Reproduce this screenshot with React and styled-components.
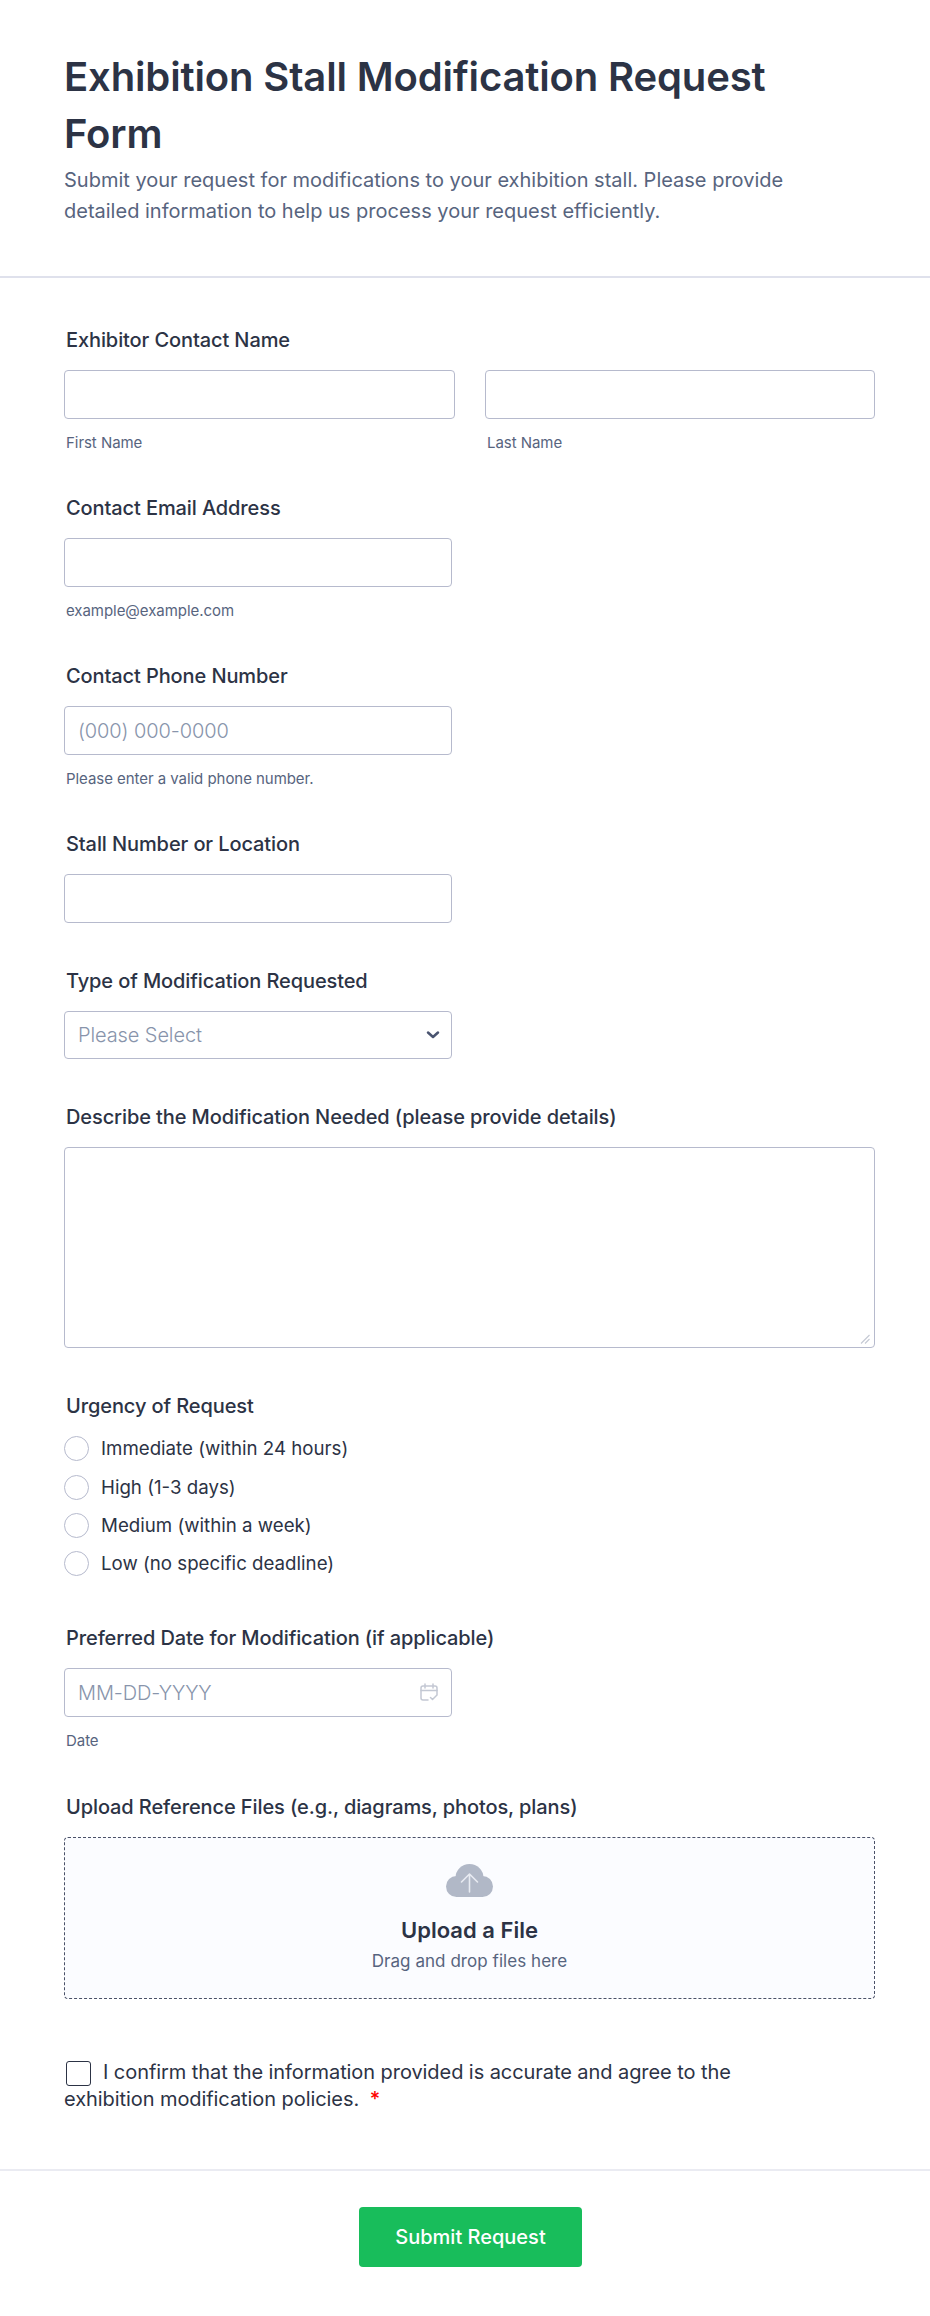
import React from 'react';
import styled, { createGlobalStyle } from 'styled-components';

const Global = createGlobalStyle`
  * { box-sizing: border-box; }
  html, body { margin: 0; padding: 0; background: #fff; }
  body { font-family: Inter, "Liberation Sans", sans-serif; color: #2c3345; }
`;
const Page = styled.form`width: 930px; height: 2316px; display: flex; flex-direction: column; background: #fff;`;
const Header = styled.header`
  padding: 48px 64px 0; border-bottom: 2px solid #dfe1ec; height: 278px;
`;
const Title = styled.h1`margin: 0 0 3px; font-size: 40px; line-height: 57px; font-weight: 600; letter-spacing: -0.14px; color: #2c3345; max-width: 740px;`;
const Subtitle = styled.p`margin: 0; font-size: 20px; line-height: 31px; color: #57647e; max-width: 760px;`;
const Body = styled.div`padding: 48px 55px 0 64px; display: flex; flex-direction: column; flex: 1;`;
const Field = styled.div`display: flex; flex-direction: column; margin-bottom: ${p => p.$mb}px;`;
const Label = styled.label`font-size: 20px; line-height: 28px; font-weight: 500; letter-spacing: -0.1px; color: #2c3345; padding-left: 2px; margin-bottom: 16px;`;
const Row = styled.div`display: flex; gap: 30px;`;
const Col = styled.div`display: flex; flex-direction: column;`;
const Input = styled.input`
  width: ${p => p.$w || 388}px; height: 49px; border: 1px solid #b6bacd; border-radius: 4px;
  padding: 0 13px; font: 300 20px Inter, sans-serif; letter-spacing: -0.1px; color: #2c3345; background: #fff; outline: none;
  &::placeholder { color: #8894ab; opacity: 1; }
`;
const Hint = styled.span`font-size: 15px; line-height: 20px; letter-spacing: -0.05px; color: #57647e; padding-left: 2px; margin-top: 14px;`;
const SelectWrap = styled.div`position: relative; width: 388px;`;
const Select = styled.select`
  display: block; width: 100%; height: 48px; border: 1px solid #b6bacd; border-radius: 4px; appearance: none;
  padding: 0 13px; font: 300 20px Inter, sans-serif; letter-spacing: -0.1px; color: #8894ab; background: #fff; outline: none;
`;
const Chevron = styled.svg`position: absolute; right: 12px; top: 19px; pointer-events: none;`;
const TextWrap = styled.div`position: relative; width: 811px;`;
const TextArea = styled.textarea`
  width: 100%; height: 201px; border: 1px solid #b6bacd; border-radius: 4px; display: block; outline: none; resize: none; background: #fff;
`;
const Grip = styled.svg`position: absolute; right: 5px; bottom: 4px; pointer-events: none;`;
const Radios = styled.div`display: flex; flex-direction: column; gap: 12.8px;`;
const RadioRow = styled.label`display: flex; align-items: center; gap: 12px; height: 25.5px; font-size: 18.7px; font-weight: 400; color: #2c3345;`;
const Radio = styled.input`
  appearance: none; margin: 0; width: 25px; height: 25px; border: 1px solid #b6bacd; border-radius: 50%; background: #fff;
`;
const DateWrap = styled.div`position: relative; width: 388px;`;
const DateIcon = styled.svg`position: absolute; right: 14px; top: 15px;`;
const Drop = styled.div`
  width: 811px; height: 162px; border: 1px dashed #4a5168; border-radius: 4px; background: #fbfcff;
  display: flex; flex-direction: column; align-items: center; padding-top: 26px;
`;
const DropTitle = styled.div`font-size: 22px; line-height: 28px; font-weight: 600; color: #2c3345; margin-top: 19px;`;
const DropSub = styled.div`font-size: 17px; line-height: 24px; letter-spacing: 0.05px; color: #57647e; margin-top: 5px;`;
const Agree = styled.label`display: block; width: 710px; font-size: 20px; line-height: 27px; font-weight: 400; letter-spacing: -0.07px; color: #2c3345;`;
const Check = styled.input`
  appearance: none; margin: 0 12px 0 2px; width: 25px; height: 25px; border: 1px solid #2c3345; border-radius: 3px; vertical-align: -7px; background: #fff;
`;
const Req = styled.span`color: #f00; margin-left: 5px; font-weight: 500;`;
const Footer = styled.footer`border-top: 2px solid #eaebf2; height: 147px; display: flex; justify-content: center; padding: 36px 0 0 11px;`;
const Submit = styled.button`
  width: 223px; height: 60px; border: 0; border-radius: 4px; background: #18bd5b; color: #fff;
  font: 500 20px Inter, sans-serif;
`;

const opts = ['Immediate (within 24 hours)', 'High (1-3 days)', 'Medium (within a week)', 'Low (no specific deadline)'];

export default function App() {
  return (
    <Page>
      <Global />
      <Header>
        <Title>Exhibition Stall Modification Request Form</Title>
        <Subtitle>Submit your request for modifications to your exhibition stall. Please provide detailed information to help us process your request efficiently.</Subtitle>
      </Header>
      <Body>
        <Field $mb={41}>
          <Label>Exhibitor Contact Name</Label>
          <Row>
            <Col><Input $w={391} /><Hint>First Name</Hint></Col>
            <Col><Input $w={390} /><Hint>Last Name</Hint></Col>
          </Row>
        </Field>
        <Field $mb={41}>
          <Label>Contact Email Address</Label>
          <Input />
          <Hint>example@example.com</Hint>
        </Field>
        <Field $mb={41}>
          <Label>Contact Phone Number</Label>
          <Input placeholder="(000) 000-0000" />
          <Hint>Please enter a valid phone number.</Hint>
        </Field>
        <Field $mb={44}>
          <Label>Stall Number or Location</Label>
          <Input />
        </Field>
        <Field $mb={44}>
          <Label>Type of Modification Requested</Label>
          <SelectWrap>
            <Select defaultValue=""><option value="">Please Select</option></Select>
            <Chevron width="14" height="10" viewBox="0 0 14 10" fill="none">
              <path d="M2 2.500 L7 7 L12 2.500" stroke="#4a5470" strokeWidth="2.500" strokeLinecap="round" strokeLinejoin="round" />
            </Chevron>
          </SelectWrap>
        </Field>
        <Field $mb={44}>
          <Label>Describe the Modification Needed (please provide details)</Label>
          <TextWrap>
            <TextArea />
            <Grip width="10" height="10" viewBox="0 0 10 10" fill="none" stroke="#c6cad5" strokeWidth="1.2">
              <path d="M1 9.500L9.500 1M5 9.500L9.500 5" />
            </Grip>
          </TextWrap>
        </Field>
        <Field $mb={48}>
          <Label>Urgency of Request</Label>
          <Radios>
            {opts.map(o => <RadioRow key={o}><Radio type="radio" name="urgency" />{o}</RadioRow>)}
          </Radios>
        </Field>
        <Field $mb={42}>
          <Label>Preferred Date for Modification (if applicable)</Label>
          <DateWrap>
            <Input placeholder="MM-DD-YYYY" />
            <DateIcon width="18" height="19" viewBox="0 0 18 19" fill="none" stroke="#c3c8d3" strokeWidth="1.5" strokeLinecap="round" strokeLinejoin="round">
              <path d="M8 17H3a2 2 0 0 1-2-2V5a2 2 0 0 1 2-2h12a2 2 0 0 1 2 2v7" />
              <path d="M1 7.500h16M5 1v4M13 1v4" />
              <path d="M10.500 14.500l2 2 4-4" />
            </DateIcon>
          </DateWrap>
          <Hint>Date</Hint>
        </Field>
        <Field $mb={60}>
          <Label>Upload Reference Files (e.g., diagrams, photos, plans)</Label>
          <Drop>
            <svg width="47" height="33" viewBox="0 0 47 33">
              <g fill="#b1b8c7">
                <circle cx="23.500" cy="14" r="14" />
                <circle cx="10.500" cy="22.500" r="10.500" />
                <circle cx="36.500" cy="22.500" r="10.500" />
                <rect x="10" y="14" width="27" height="19" />
              </g>
              <path fill="none" stroke="#e8ebf2" strokeWidth="1.6" strokeLinecap="round" strokeLinejoin="round" d="M23.500 28V10M15.500 18l8-8 8 8" />
            </svg>
            <DropTitle>Upload a File</DropTitle>
            <DropSub>Drag and drop files here</DropSub>
          </Drop>
        </Field>
        <Agree>
          <Check type="checkbox" />I confirm that the information provided is accurate and agree to the exhibition modification policies. <Req>*</Req>
        </Agree>
      </Body>
      <Footer><Submit type="button">Submit Request</Submit></Footer>
    </Page>
  );
}
